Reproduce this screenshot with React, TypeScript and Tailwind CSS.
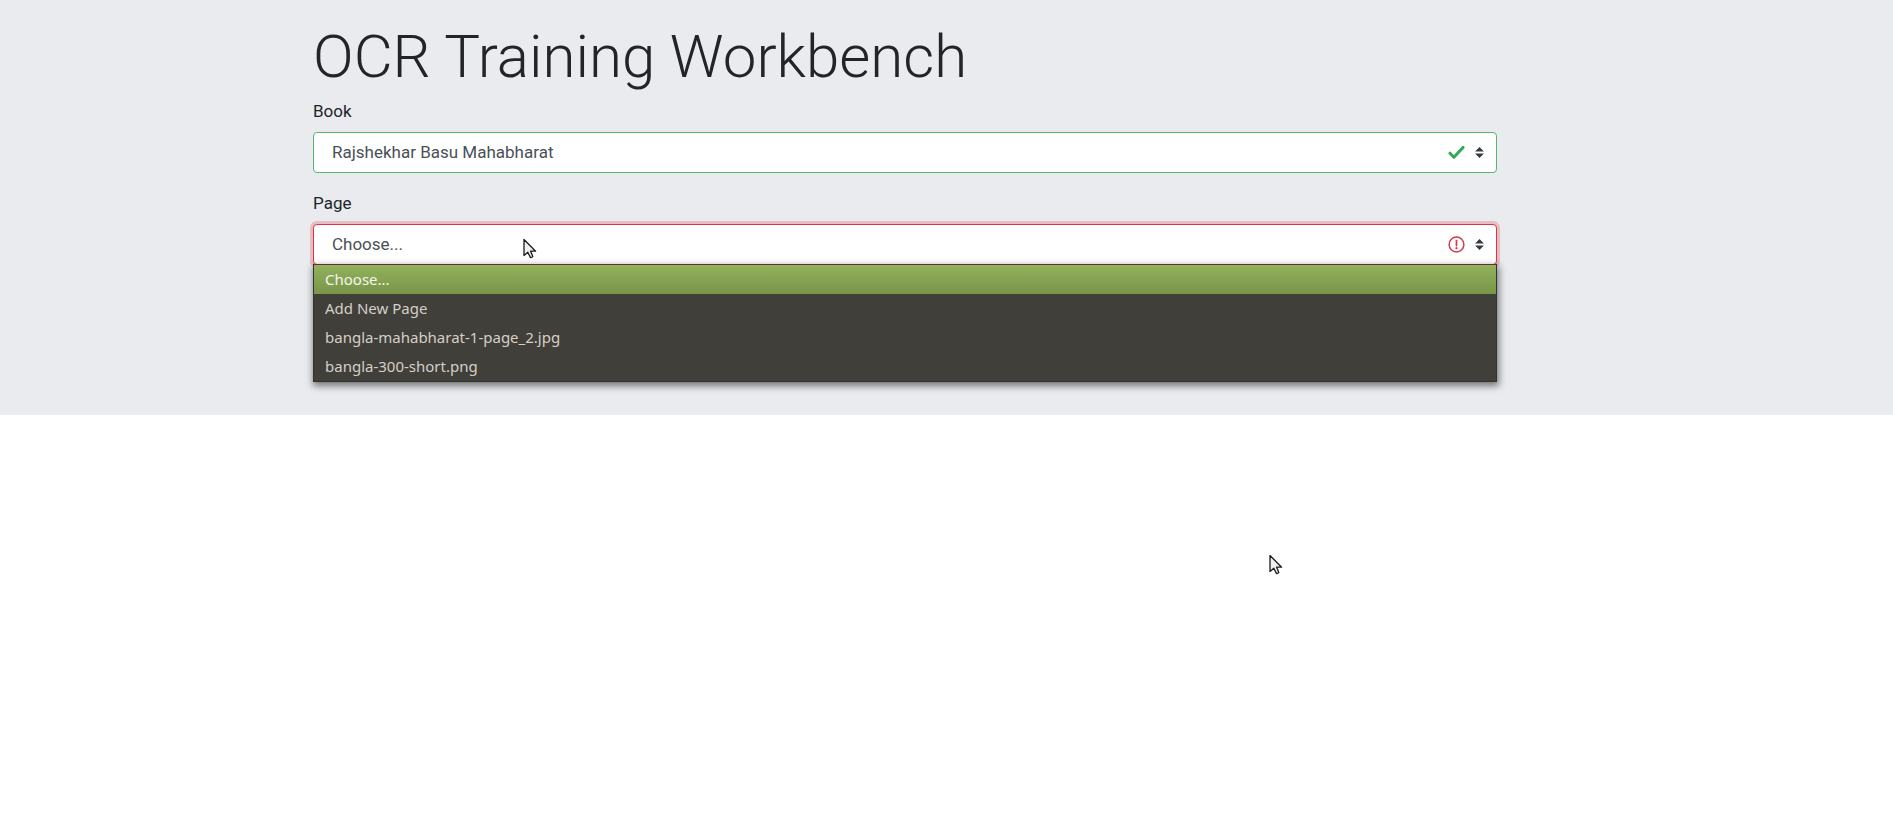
import { useState } from "react";

const pages = ["Choose...", "Add New Page", "bangla-mahabharat-1-page_2.jpg", "bangla-300-short.png"];

const selectClass =
  "block h-[41px] w-full appearance-none rounded-[4px] border bg-white pt-px pr-20 pl-[18px] text-[17px] text-[#495057] outline-none";

function Carets() {
  return (
    <svg className="h-[11px] w-[9px]" viewBox="0 0 4 5" fill="#343a40" aria-hidden="true">
      <path d="M2 0L0 2h4zm0 5L0 3h4z" />
    </svg>
  );
}

function Check() {
  return (
    <svg
      className="h-[17px] w-[17px]"
      viewBox="0 0 17 17"
      fill="none"
      stroke="#34a853"
      strokeWidth="3"
      strokeLinecap="round"
      strokeLinejoin="round"
      aria-hidden="true"
    >
      <path d="M2 9.2L5.9 13.2L15 3.4" />
    </svg>
  );
}

function Alert() {
  return (
    <svg className="h-[17px] w-[17px]" viewBox="0 0 17 17" fill="none" stroke="#d63a50" aria-hidden="true">
      <circle cx="8.5" cy="8.5" r="7.4" strokeWidth="1.5" />
      <path d="M8.5 4.6v4.9" strokeWidth="1.8" strokeLinecap="round" />
      <circle cx="8.5" cy="12.2" r="1.1" fill="#d63a50" stroke="none" />
    </svg>
  );
}

function Pointer({ className }: { className: string }) {
  return (
    <svg className={`pointer-events-none absolute h-[21px] w-[14px] ${className}`} viewBox="0 0 14 21" aria-hidden="true">
      <path
        d="M1 1.5V17.5L4.8 14.2L7.4 19.4Q8.6 20 9.8 18.4L7.6 13.2H12.6Z"
        fill="#f0f0f0"
        stroke="#1c1c1c"
        strokeWidth="1.3"
        strokeLinejoin="round"
      />
    </svg>
  );
}

export default function App() {
  const [page, setPage] = useState(pages[0]);

  return (
    <div className="relative min-h-screen bg-white font-['Roboto',sans-serif] text-[#212529]">
      <header className="bg-[#e9ebee] pt-[21px] pr-[83px] pb-[150px]">
        <main className="mx-auto w-full max-w-[1184px]">
          <h1 className="text-[60px] leading-[72px] font-light">OCR Training Workbench</h1>

          <div className="mt-[5px]">
            <label htmlFor="book" className="block text-[17px] leading-[26px]">
              Book
            </label>
            <div className="relative mt-2">
              <select id="book" className={`${selectClass} border-[#55b76e]`}>
                <option>Rajshekhar Basu Mahabharat</option>
              </select>
              <div className="pointer-events-none absolute inset-y-0 right-[13px] flex items-center gap-[10px]">
                <Check />
                <Carets />
              </div>
            </div>
          </div>

          <div className="mt-[17px]">
            <label htmlFor="page" className="block text-[17px] leading-[26px]">
              Page
            </label>
            <div className="relative mt-2">
              <select
                id="page"
                value={page}
                onChange={(e) => setPage(e.target.value)}
                className={`${selectClass} border-[#dc3545] shadow-[0_0_0_3px_rgba(220,53,69,0.25)]`}
              >
                {pages.map((name) => (
                  <option key={name}>{name}</option>
                ))}
              </select>
              <div className="pointer-events-none absolute inset-y-0 right-[13px] flex items-center gap-[10px]">
                <Alert />
                <Carets />
              </div>
              <Pointer className="top-[14px] left-[210px]" />
              <div
                role="listbox"
                aria-label="Page"
                className="absolute top-full left-0 -mt-px w-full border border-[#33322e] border-t-[#6b2f33] bg-[#413f3a] shadow-[1px_3px_7px_1px_rgba(0,0,0,0.5)]"
              >
                {pages.map((name) => (
                  <button
                    key={name}
                    type="button"
                    role="option"
                    aria-selected={name === page}
                    onClick={() => setPage(name)}
                    className="block h-[29px] w-full px-[11px] text-left font-['Noto_Sans',sans-serif] text-[15px] text-[#d3d0c8] aria-selected:bg-linear-to-b aria-selected:from-[#92b25c] aria-selected:to-[#799549] aria-selected:text-[#f4f6ee]"
                  >
                    {name}
                  </button>
                ))}
              </div>
            </div>
          </div>
        </main>
      </header>
      <Pointer className="top-[554px] left-[1269px]" />
    </div>
  );
}
